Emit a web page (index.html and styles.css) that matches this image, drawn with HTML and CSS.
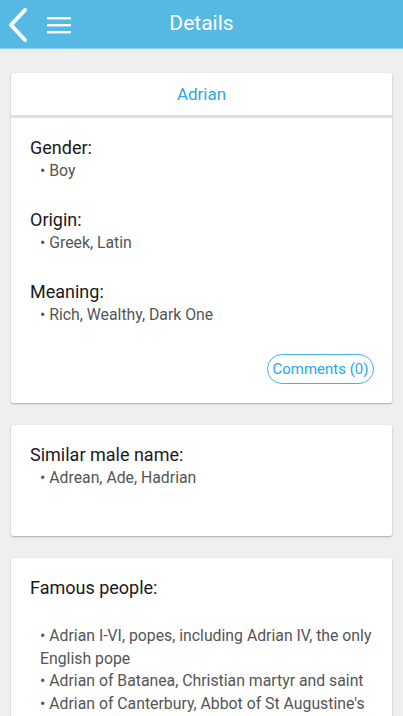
FILE: index.html
```html
<!DOCTYPE html>
<html>
<head>
<meta charset="utf-8">
<link rel="stylesheet" href="styles.css">
</head>
<body>
<header class="topbar">
  <svg class="back" width="24" height="36" viewBox="0 0 24 36">
    <polyline points="19,3 5,18 19,33" fill="none" stroke="#fff" stroke-width="4" stroke-linecap="round" stroke-linejoin="round"/>
  </svg>
  <svg class="menu" width="24" height="20" viewBox="0 0 24 20">
    <rect x="0" y="2" width="24" height="2.4" fill="#fff"/>
    <rect x="0" y="9" width="24" height="2.4" fill="#fff"/>
    <rect x="0" y="16" width="24" height="2.4" fill="#fff"/>
  </svg>
  <h1 class="title">Details</h1>
</header>
<main class="content">
  <section class="card">
    <div class="card-head">Adrian</div>
    <div class="card-body">
      <div class="field">
        <div class="label">Gender:</div>
        <div class="item">• Boy</div>
      </div>
      <div class="field">
        <div class="label">Origin:</div>
        <div class="item">• Greek, Latin</div>
      </div>
      <div class="field">
        <div class="label">Meaning:</div>
        <div class="item">• Rich, Wealthy, Dark One</div>
      </div>
      <div class="actions">
        <button class="pill">Comments (0)</button>
      </div>
    </div>
  </section>
  <section class="card card-similar">
    <div class="card-body">
      <div class="label">Similar male name:</div>
      <div class="item">• Adrean, Ade, Hadrian</div>
    </div>
  </section>
  <section class="card">
    <div class="card-body">
      <div class="label">Famous people:</div>
      <div class="list">
        <div class="item">• Adrian I-VI, popes, including Adrian IV, the only English pope</div>
        <div class="item">• Adrian of Batanea, Christian martyr and saint</div>
        <div class="item">• Adrian of Canterbury, Abbot of St Augustine's Abbey</div>
      </div>
    </div>
  </section>
</main>
</body>
</html>
```

FILE: styles.css
```css
html, body {
  margin: 0;
  padding: 0;
}
body {
  background: #efefef;
  font-family: Roboto, "Noto Sans", Arial, sans-serif;
}
.topbar {
  position: relative;
  height: 48px;
  background: #56b9e4;
  border-bottom: 1px solid #8fd0ec;
  display: flex;
  align-items: center;
}
.back {
  margin-left: 6px;
  margin-top: 1px;
}
.menu {
  margin-left: 17px;
  margin-top: 2px;
}
.title {
  position: absolute;
  left: 0;
  right: 0;
  top: 0;
  margin: 0;
  line-height: 47px;
  text-align: center;
  color: #fff;
  font-weight: 400;
  font-size: 21px;
  pointer-events: none;
}
.content {
  padding: 24px 11px 0;
  display: flex;
  flex-direction: column;
  gap: 22px;
}
.card {
  background: #fff;
  border-radius: 2px;
  box-shadow: 0 1px 2px rgba(0,0,0,0.28), 0 0 1px rgba(0,0,0,0.12);
}
.card-head {
  height: 42px;
  line-height: 42px;
  text-align: center;
  color: #2aa8e0;
  font-size: 17px;
  border-bottom: 3px solid #dedede;
}
.card-body {
  padding: 18px 14px 19px 19px;
}
.card-body .actions {
  margin-right: 4px;
}
.field + .field {
  margin-top: 26px;
}
.label {
  font-size: 18px;
  line-height: 24px;
  color: #1a1a1a;
}
.item {
  font-size: 15.8px;
  line-height: 22px;
  color: #555;
  padding-left: 10px;
}
.actions {
  display: flex;
  justify-content: flex-end;
  margin-top: 28px;
}
.pill {
  height: 30px;
  width: 107px;
  padding: 0;
  border: 1px solid #45b2e4;
  border-radius: 15px;
  background: #fff;
  color: #2aa8e0;
  font-family: Roboto, "Noto Sans", Arial, sans-serif;
  font-size: 15px;
}
.card-similar .card-body {
  padding-bottom: 47px;
}
.list {
  margin-top: 25px;
}
.list .item {
  line-height: 22.5px;
}
```
